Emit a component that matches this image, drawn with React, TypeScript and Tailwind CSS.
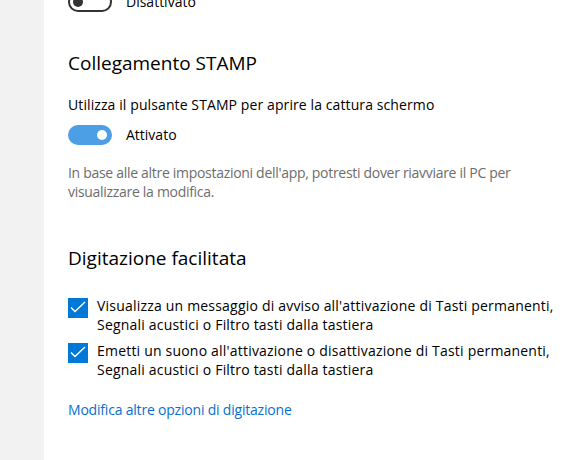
import React from "react";

const Toggle = ({ on }: { on: boolean }) =>
  on ? (
    <div className="w-[44px] h-[20px] rounded-full bg-[#4c9fe4] flex items-center justify-end pr-[5px] shrink-0">
      <div className="w-[10px] h-[10px] rounded-full bg-white" />
    </div>
  ) : (
    <div className="w-[44px] h-[20px] rounded-full border-2 border-[#333333] flex items-center pl-[3px] shrink-0">
      <div className="w-[10px] h-[10px] rounded-full bg-[#333333]" />
    </div>
  );

const Check = ({ lines }: { lines: string[] }) => (
  <div className="flex items-start gap-[9px]">
    <div className="mt-[2px] w-[20px] h-[20px] bg-[#0078d7] flex items-center justify-center shrink-0">
      <svg width="20" height="20" viewBox="0 0 20 20" fill="none">
        <path d="M3 9.5 L7 13.5 L17 4" stroke="white" strokeWidth="1.4" />
      </svg>
    </div>
    <div className="text-[14px] leading-[19px] tracking-[0.2px] text-black">
      {lines.map((l) => (
        <div key={l}>{l}</div>
      ))}
    </div>
  </div>
);

export default function App() {
  return (
    <div className="w-[570px] h-[460px] overflow-hidden flex bg-white font-['Segoe_UI','Open_Sans',sans-serif]">
      {/* Sidebar */}
      <div className="w-[44px] h-full bg-[#f2f2f2] shrink-0" />

      {/* Content */}
      <div className="flex-1 pl-[24px] -mt-[8px] flex flex-col">
        <div className="flex items-center gap-[14px]">
          <Toggle on={false} />
          <span className="text-[14px] leading-[20px] text-black">Disattivato</span>
        </div>

        <h2 className="mt-[37px] text-[19px] leading-[28px] text-black">Collegamento STAMP</h2>

        <p className="mt-[18px] text-[14px] leading-[20px] tracking-[0.1px] text-black">
          Utilizza il pulsante STAMP per aprire la cattura schermo
        </p>

        <div className="mt-[10px] flex items-center gap-[14px]">
          <Toggle on />
          <span className="text-[14px] leading-[20px] text-black">Attivato</span>
        </div>

        <p className="mt-[18px] text-[14px] leading-[19px] tracking-[-0.3px] text-[#6d6d6d]">
          In base alle altre impostazioni dell'app, potresti dover riavviare il PC per
          <br />
          visualizzare la modifica.
        </p>

        <h2 className="mt-[43px] text-[19px] leading-[28px] text-black">Digitazione facilitata</h2>

        <div className="mt-[24px] flex flex-col gap-[7px]">
          <Check
            lines={[
              "Visualizza un messaggio di avviso all'attivazione di Tasti permanenti,",
              "Segnali acustici o Filtro tasti dalla tastiera",
            ]}
          />
          <Check
            lines={[
              "Emetti un suono all'attivazione o disattivazione di Tasti permanenti,",
              "Segnali acustici o Filtro tasti dalla tastiera",
            ]}
          />
        </div>

        <a href="#" className="mt-[21px] text-[14px] leading-[20px] tracking-[-0.2px] text-[#0a6fcf]">
          Modifica altre opzioni di digitazione
        </a>
      </div>
    </div>
  );
}
